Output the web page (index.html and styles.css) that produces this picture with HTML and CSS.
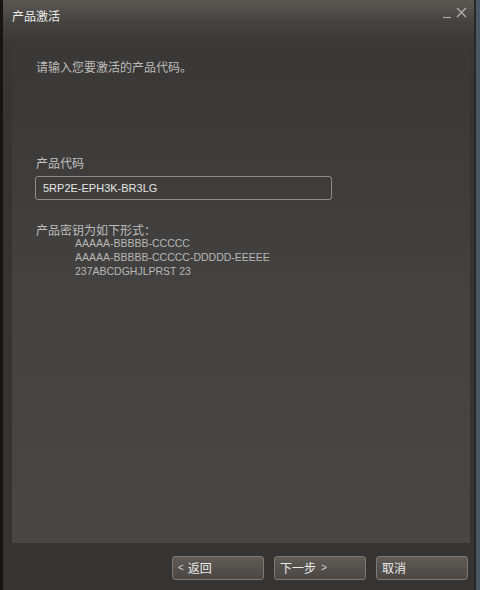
FILE: index.html
```html
<!DOCTYPE html>
<html lang="zh-CN">
<head>
<meta charset="utf-8">
<title>产品激活</title>
<link rel="stylesheet" href="styles.css">
</head>
<body>
<div class="window">
  <div class="titlebar">
    <span class="title">产品激活</span>
    <div class="controls">
      <svg class="ctl" width="10" height="12" viewBox="0 0 10 12"><path d="M1 10.5H9" stroke="#a8a6a4" stroke-width="1.2"/></svg>
      <svg class="ctl" width="11" height="12" viewBox="0 0 11 12"><path d="M1 1L10 10M10 1L1 10" stroke="#b4b2b0" stroke-width="1.3"/></svg>
    </div>
  </div>
  <div class="panel">
    <p class="intro">请输入您要激活的产品代码。</p>
    <label class="label">产品代码</label>
    <div class="input">5RP2E-EPH3K-BR3LG</div>
    <p class="format-title">产品密钥为如下形式：</p>
    <ul class="formats">
      <li>AAAAA-BBBBB-CCCCC</li>
      <li>AAAAA-BBBBB-CCCCC-DDDDD-EEEEE</li>
      <li>237ABCDGHJLPRST 23</li>
    </ul>
  </div>
  <div class="footer">
    <button class="btn"><span class="chev">&lt;</span>返回</button>
    <button class="btn">下一步<span class="chev right">&gt;</span></button>
    <button class="btn">取消</button>
  </div>
</div>
</body>
</html>
```

FILE: styles.css
```css
html, body {
  margin: 0;
  padding: 0;
}
body {
  width: 480px;
  height: 590px;
  background: #4a5765;
  font-family: "Noto Sans CJK SC", "Liberation Sans", sans-serif;
  overflow: hidden;
}
.window {
  box-sizing: border-box;
  width: 476px;
  height: 590px;
  display: flex;
  flex-direction: column;
  background: linear-gradient(#5b5854 0px, #454340 22px, #3a3836 45px, #363432 120px);
  border-left: 3px solid #161514;
  border-right: 2px solid #2a2826;
}
.titlebar {
  height: 30px;
  flex: none;
  display: flex;
  align-items: flex-start;
  justify-content: space-between;
  padding: 0 7px 0 9px;
}
.title {
  color: #ecebea;
  font-size: 12px;
  line-height: 16px;
  margin-top: 8px;
}
.controls {
  display: flex;
  gap: 4px;
  margin-top: 7px;
}
.ctl {
  display: block;
}
.panel {
  flex: 1;
  margin: 0 4px 0 9px;
  padding: 29px 24px 0 24px;
  background: linear-gradient(rgba(70,69,67,0) 0px, rgba(62,60,58,0.6) 60px, #434240 260px, #484745 513px);
}
.intro {
  margin: 0;
  color: #bdbcbb;
  font-size: 12px;
  line-height: 16px;
}
.label {
  display: block;
  margin-top: 80px;
  color: #c3c2c1;
  font-size: 12px;
  line-height: 16px;
}
.input {
  box-sizing: border-box;
  width: 297px;
  height: 24px;
  margin-top: 5px;
  margin-left: -1px;
  border: 1px solid #8f8d8b;
  border-radius: 3px;
  padding: 0 7px;
  color: #e6e5e4;
  font-family: "Liberation Sans", sans-serif;
  font-size: 11px;
  line-height: 22px;
}
.format-title {
  margin: 24px 0 0 0;
  color: #bdbcbb;
  font-size: 12px;
  line-height: 12px;
}
.formats {
  list-style: none;
  margin: 0 0 0 39px;
  padding: 0;
  color: #b8b7b6;
  font-family: "Liberation Sans", sans-serif;
  font-size: 10.5px;
  line-height: 14px;
}
.footer {
  height: 47px;
  flex: none;
  display: flex;
  justify-content: flex-end;
  align-items: flex-start;
  gap: 10px;
  padding: 13px 6px 0 0;
  box-sizing: border-box;
}
.btn {
  box-sizing: border-box;
  width: 92px;
  height: 24px;
  border: 1px solid #7c7976;
  border-radius: 3px;
  background: linear-gradient(#5f5b57, #4a4744);
  color: #ecebea;
  font-family: "Noto Sans CJK SC", "Liberation Sans", sans-serif;
  font-size: 12px;
  line-height: 20px;
  text-align: left;
  padding: 0 0 0 5px;
  display: flex;
  align-items: center;
}
.chev {
  font-family: "Liberation Sans", sans-serif;
  font-size: 10px;
  margin-right: 4px;
  color: #d8d7d6;
}
.chev.right {
  margin: 0 0 0 5px;
}
```
